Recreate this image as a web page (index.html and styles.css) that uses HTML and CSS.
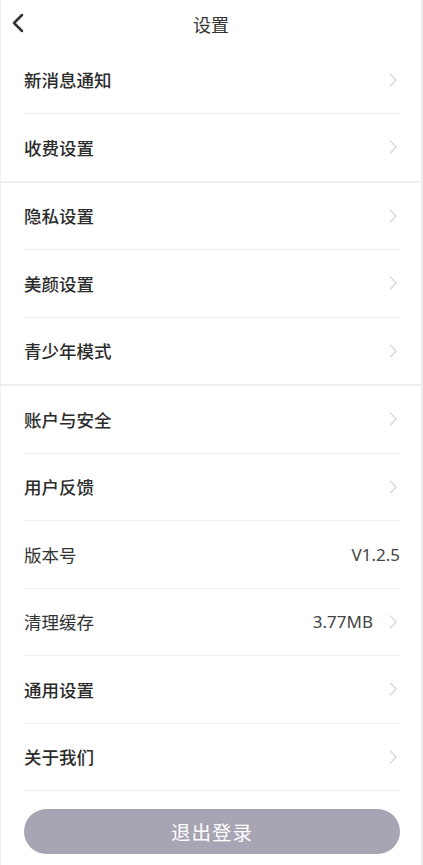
FILE: index.html
```html
<!DOCTYPE html>
<html lang="zh-CN">
<head>
<meta charset="utf-8">
<title>设置</title>
<link rel="stylesheet" href="styles.css">
</head>
<body>
<div class="page">
  <header class="topbar">
    <span class="back">
      <svg width="14" height="20" viewBox="0 0 14 20"><path d="M11 2 L3 10 L11 18" fill="none" stroke="#333" stroke-width="2.5" stroke-linecap="round" stroke-linejoin="round"/></svg>
    </span>
    <h1 class="title">设置</h1>
  </header>

  <section class="group">
    <div class="row"><span class="label">新消息通知</span><svg class="chev" width="8" height="16" viewBox="0 0 8 16"><path d="M1 1.5 L7 8 L1 14.5" fill="none" stroke="#c9c9c9" stroke-width="1.1"/></svg></div>
    <div class="row"><span class="label">收费设置</span><svg class="chev" width="8" height="16" viewBox="0 0 8 16"><path d="M1 1.5 L7 8 L1 14.5" fill="none" stroke="#c9c9c9" stroke-width="1.1"/></svg></div>
  </section>

  <section class="group">
    <div class="row"><span class="label">隐私设置</span><svg class="chev" width="8" height="16" viewBox="0 0 8 16"><path d="M1 1.5 L7 8 L1 14.5" fill="none" stroke="#c9c9c9" stroke-width="1.1"/></svg></div>
    <div class="row"><span class="label">美颜设置</span><svg class="chev" width="8" height="16" viewBox="0 0 8 16"><path d="M1 1.5 L7 8 L1 14.5" fill="none" stroke="#c9c9c9" stroke-width="1.1"/></svg></div>
    <div class="row"><span class="label">青少年模式</span><svg class="chev" width="8" height="16" viewBox="0 0 8 16"><path d="M1 1.5 L7 8 L1 14.5" fill="none" stroke="#c9c9c9" stroke-width="1.1"/></svg></div>
  </section>

  <section class="group last">
    <div class="row"><span class="label">账户与安全</span><svg class="chev" width="8" height="16" viewBox="0 0 8 16"><path d="M1 1.5 L7 8 L1 14.5" fill="none" stroke="#c9c9c9" stroke-width="1.1"/></svg></div>
    <div class="row"><span class="label">用户反馈</span><svg class="chev" width="8" height="16" viewBox="0 0 8 16"><path d="M1 1.5 L7 8 L1 14.5" fill="none" stroke="#c9c9c9" stroke-width="1.1"/></svg></div>
    <div class="row"><span class="label light">版本号</span><span class="value">V1.2.5</span></div>
    <div class="row"><span class="label light">清理缓存</span><span class="value">3.77MB</span><svg class="chev" width="8" height="16" viewBox="0 0 8 16"><path d="M1 1.5 L7 8 L1 14.5" fill="none" stroke="#c9c9c9" stroke-width="1.1"/></svg></div>
    <div class="row"><span class="label">通用设置</span><svg class="chev" width="8" height="16" viewBox="0 0 8 16"><path d="M1 1.5 L7 8 L1 14.5" fill="none" stroke="#c9c9c9" stroke-width="1.1"/></svg></div>
    <div class="row lined"><span class="label">关于我们</span><svg class="chev" width="8" height="16" viewBox="0 0 8 16"><path d="M1 1.5 L7 8 L1 14.5" fill="none" stroke="#c9c9c9" stroke-width="1.1"/></svg></div>
    <div class="footer"><button class="logout">退出登录</button></div>
  </section>
</div>
</body>
</html>
```

FILE: styles.css
```css
html, body {
  margin: 0;
  padding: 0;
}
body {
  background: #efefef;
  font-family: "Noto Sans CJK SC", "Noto Sans", sans-serif;
  color: #222;
}
.page {
  width: 423px;
  height: 865px;
  overflow: hidden;
  display: flex;
  flex-direction: column;
  gap: 2px;
}
.topbar {
  height: 46.5px;
  flex: none;
  background: #fff;
  margin: 0 2px 0 1px;
  display: flex;
  align-items: center;
  justify-content: center;
  position: relative;
  margin-bottom: -2px;
}
.back {
  position: absolute;
  left: 10px;
  top: 13px;
  display: flex;
}
.title {
  margin: 0;
  font-size: 18px;
  font-weight: 400;
  color: #333;
  line-height: 1;
  position: relative;
  top: 1px;
}
.group {
  flex: none;
  background: #fff;
  margin: 0 2px 0 1px;
  padding: 0 21px 0 23px;
}
.group.last {
  flex: 1;
}
.row {
  height: 66.5px;
  display: flex;
  align-items: center;
  border-bottom: 1px solid #efefef;
}
.group .row:last-child {
  border-bottom: none;
}
.group.last .row.lined {
  border-bottom: 1px solid #efefef;
}
.label {
  flex: 1;
  font-size: 17.5px;
  font-weight: 500;
  color: #2b2b2b;
}
.label.light {
  font-weight: 400;
  color: #333;
}
.value {
  font-size: 17px;
  color: #444;
  font-family: "Noto Sans", "Noto Sans CJK SC", sans-serif;
}
.chev {
  display: block;
  margin-right: 3px;
  margin-left: 16px;
}
.footer {
  padding-top: 18px;
}
.logout {
  display: block;
  width: 100%;
  height: 45px;
  border: none;
  border-radius: 23px;
  background: #a7a4b3;
  color: #fff;
  font-family: "Noto Sans CJK SC", sans-serif;
  font-size: 19.5px;
  letter-spacing: 1px;
}
```
